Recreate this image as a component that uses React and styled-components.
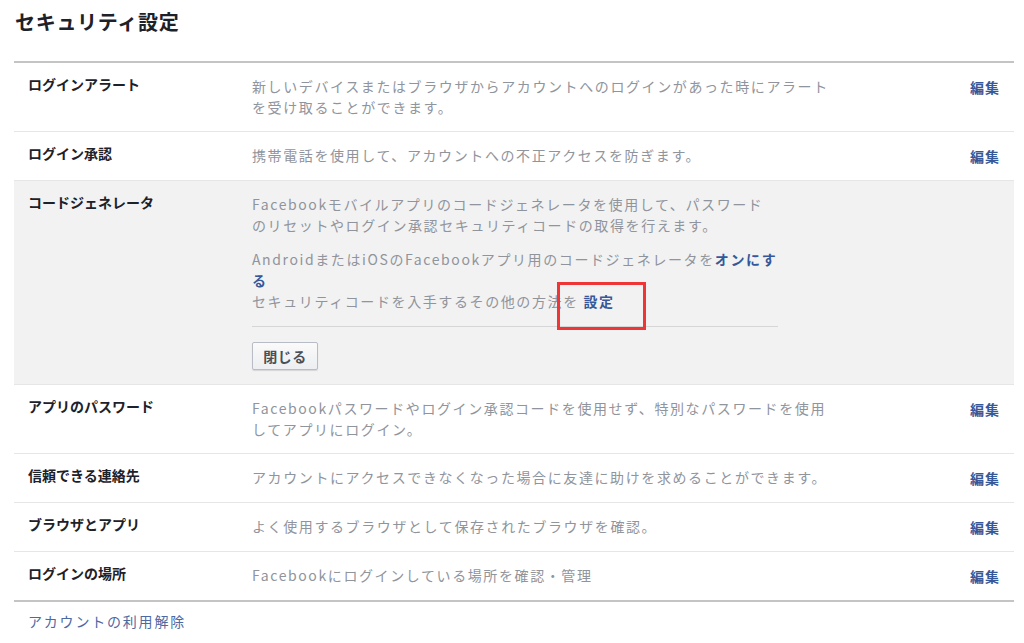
import React from 'react'
import styled, { createGlobalStyle } from 'styled-components'

const GlobalStyle = createGlobalStyle`
  html, body {
    margin: 0;
    padding: 0;
    background: #ffffff;
    font-family: "Noto Sans CJK JP", "Noto Sans", sans-serif;
  }
`

const Page = styled.div`
  width: 1024px;
  height: 643px;
  overflow: hidden;
  padding: 0 10px 0 14px;
  box-sizing: border-box;
`

const Title = styled.h1`
  margin: 0;
  padding: 9px 0 0 1px;
  height: 61px;
  box-sizing: border-box;
  font-size: 20px;
  line-height: 26px;
  font-weight: 700;
  letter-spacing: 0.7px;
  color: #1d2129;
`

const List = styled.div`
  width: 1000px;
  border-top: 2px solid #c4c4c4;
  border-bottom: 2px solid #c4c4c4;
`

const Row = styled.div`
  display: grid;
  grid-template-columns: 224px 590px 1fr auto;
  padding: 13px 14px ${({ $open }) => ($open ? 14 : 13)}px;
  background: ${({ $open }) => ($open ? '#f2f2f2' : '#ffffff')};
  border-top: 1px solid #e6e6e6;
  &:first-child {
    border-top: none;
  }
`

const Label = styled.div`
  font-size: 14px;
  line-height: 21px;
  font-weight: 700;
  color: #1d2129;
  margin-top: -2px;
`

const Desc = styled.div`
  font-size: 14px;
  line-height: 21px;
  letter-spacing: 1.6px;
  color: #90949c;
  white-space: nowrap;
`

const Para = styled.p`
  margin: 0 0 ${({ $gap }) => $gap || 0}px;
`

const Strong = styled.a`
  position: relative;
  color: #365899;
  font-weight: 700;
  text-decoration: none;
`

const Highlight = styled.span`
  position: absolute;
  left: -27px;
  top: -9px;
  width: 89px;
  height: 48px;
  box-sizing: border-box;
  border: 3px solid #ef3535;
  pointer-events: none;
`

const Divider = styled.div`
  width: 526px;
  height: 1px;
  background: #d6d6d6;
  margin: 14px 0 15px;
`

const CloseButton = styled.button`
  width: 66px;
  height: 28px;
  box-sizing: border-box;
  border: 1px solid #b8bcc4;
  border-radius: 2px;
  background: linear-gradient(#fafafa, #eceef1);
  box-shadow: 0 1px 1px rgba(0, 0, 0, 0.12);
  font-family: inherit;
  font-size: 14px;
  font-weight: 700;
  color: #4b4f56;
  letter-spacing: 0.5px;
  padding: 0;
`

const Edit = styled.a`
  grid-column: 4;
  font-size: 14px;
  line-height: 21px;
  font-weight: 700;
  letter-spacing: 1px;
  color: #365899;
  text-decoration: none;
  margin-top: 1px;
`

const Footer = styled.a`
  display: block;
  padding: 9px 0 0 14px;
  font-size: 14px;
  line-height: 21px;
  letter-spacing: 1.8px;
  color: #4e69a2;
  text-decoration: none;
`

const rows = [
  {
    label: 'ログインアラート',
    lines: ['新しいデバイスまたはブラウザからアカウントへのログインがあった時にアラート', 'を受け取ることができます。'],
  },
  { label: 'ログイン承認', lines: ['携帯電話を使用して、アカウントへの不正アクセスを防ぎます。'] },
  { label: 'コードジェネレータ', open: true },
  {
    label: 'アプリのパスワード',
    lines: ['Facebookパスワードやログイン承認コードを使用せず、特別なパスワードを使用', 'してアプリにログイン。'],
  },
  { label: '信頼できる連絡先', lines: ['アカウントにアクセスできなくなった場合に友達に助けを求めることができます。'] },
  { label: 'ブラウザとアプリ', lines: ['よく使用するブラウザとして保存されたブラウザを確認。'] },
  { label: 'ログインの場所', lines: ['Facebookにログインしている場所を確認・管理'] },
]

const CodeGenerator = () => (
  <Desc>
    <Para $gap={13}>
      Facebookモバイルアプリのコードジェネレータを使用して、パスワード
      <br />
      のリセットやログイン承認セキュリティコードの取得を行えます。
    </Para>
    <Para>
      AndroidまたはiOSのFacebookアプリ用のコードジェネレータを<Strong href="#">オンにす</Strong>
      <br />
      <Strong href="#">る</Strong>
      <br />
      セキュリティコードを入手するその他の方法を{' '}
      <Strong href="#">
        設定
        <Highlight />
      </Strong>
    </Para>
    <Divider />
    <CloseButton>閉じる</CloseButton>
  </Desc>
)

export default function App() {
  return (
    <>
      <GlobalStyle />
      <Page>
        <Title>セキュリティ設定</Title>
        <List>
          {rows.map((r) => (
            <Row key={r.label} $open={r.open}>
              <Label>{r.label}</Label>
              {r.open ? (
                <CodeGenerator />
              ) : (
                <Desc>
                  {r.lines.map((l, i) => (
                    <React.Fragment key={i}>
                      {i > 0 && <br />}
                      {l}
                    </React.Fragment>
                  ))}
                </Desc>
              )}
              {!r.open && <Edit href="#">編集</Edit>}
            </Row>
          ))}
        </List>
        <Footer href="#">アカウントの利用解除</Footer>
      </Page>
    </>
  )
}
